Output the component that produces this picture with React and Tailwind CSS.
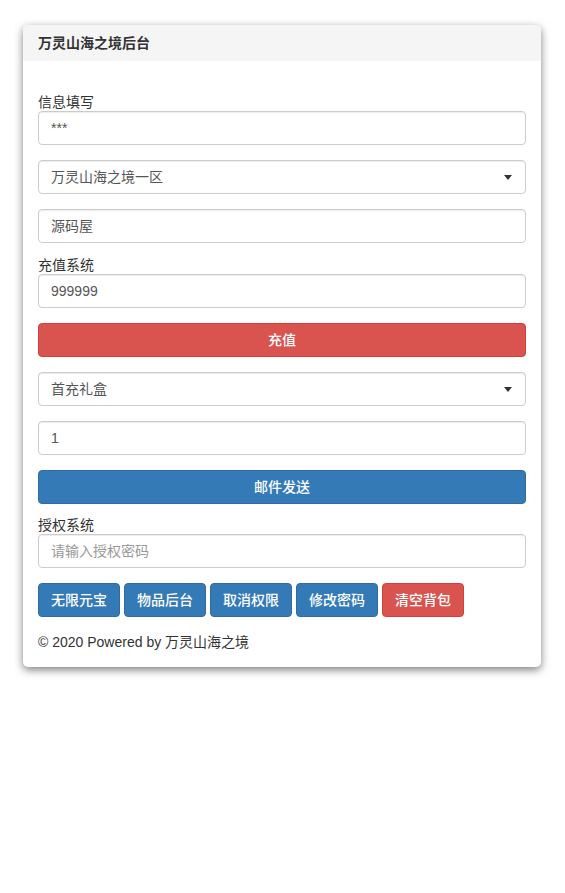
import React from "react";

const font = { fontFamily: '"Liberation Sans", "Noto Sans CJK SC", sans-serif' };

function Input({ value, placeholder }) {
  return (
    <div className="h-[34px] w-full rounded-[4px] border border-[#ccc] bg-white px-[12px] flex items-center text-[14px] text-[#555] shadow-[inset_0_1px_1px_rgba(0,0,0,0.075)]">
      {value ? <span>{value}</span> : <span className="text-[#999]">{placeholder}</span>}
    </div>
  );
}

function Select({ value }) {
  return (
    <div className="h-[34px] w-full rounded-[4px] border border-[#ccc] bg-white pl-[12px] pr-[12px] flex items-center justify-between text-[14px] text-[#555] shadow-[inset_0_1px_1px_rgba(0,0,0,0.075)]">
      <span>{value}</span>
      <span className="w-0 h-0 border-l-[4px] border-r-[4px] border-t-[5px] border-l-transparent border-r-transparent border-t-[#333] mr-[1px]" />
    </div>
  );
}

function Label({ children, className = "" }) {
  return <div className={"h-[20px] leading-[22px] text-[14px] text-[#333] " + className}>{children}</div>;
}

function Btn({ children, color }) {
  const c =
    color === "red"
      ? "bg-[#d9534f] border-[#d43f3a]"
      : "bg-[#337ab7] border-[#2e6da4]";
  return (
    <div className={"h-[34px] rounded-[4px] border px-[12px] flex items-center justify-center text-[14px] font-medium text-white " + c}>
      {children}
    </div>
  );
}

export default function App() {
  return (
    <div className="min-h-[893px] bg-white pt-[25px]" style={font}>
      <div className="ml-[23px] w-[518px] rounded-[5px] bg-white shadow-[0_3px_8px_rgba(0,0,0,0.5)] overflow-hidden">
        <div className="h-[36px] bg-[#f5f5f5] px-[15px] flex items-center text-[14px] font-bold text-[#333]">
          万灵山海之境后台
        </div>
        <div className="px-[15px] pb-[15px]">
          <Label className="mt-[30px]">信息填写</Label>
          <Input value="***" />
          <div className="mt-[15px]"><Select value="万灵山海之境一区" /></div>
          <div className="mt-[15px]"><Input value="源码屋" /></div>
          <Label className="mt-[11px]">充值系统</Label>
          <Input value="999999" />
          <div className="mt-[15px]"><Btn color="red">充值</Btn></div>
          <div className="mt-[15px]"><Select value="首充礼盒" /></div>
          <div className="mt-[15px]"><Input value="1" /></div>
          <div className="mt-[15px]"><Btn color="blue">邮件发送</Btn></div>
          <Label className="mt-[10px]">授权系统</Label>
          <Input placeholder="请输入授权密码" />
          <div className="mt-[15px] flex gap-[4px]">
            <Btn color="blue">无限元宝</Btn>
            <Btn color="blue">物品后台</Btn>
            <Btn color="blue">取消权限</Btn>
            <Btn color="blue">修改密码</Btn>
            <Btn color="red">清空背包</Btn>
          </div>
          <div className="mt-[15px] h-[20px] leading-[20px] text-[14px] text-[#333]">
            © 2020 Powered by 万灵山海之境
          </div>
        </div>
      </div>
    </div>
  );
}
